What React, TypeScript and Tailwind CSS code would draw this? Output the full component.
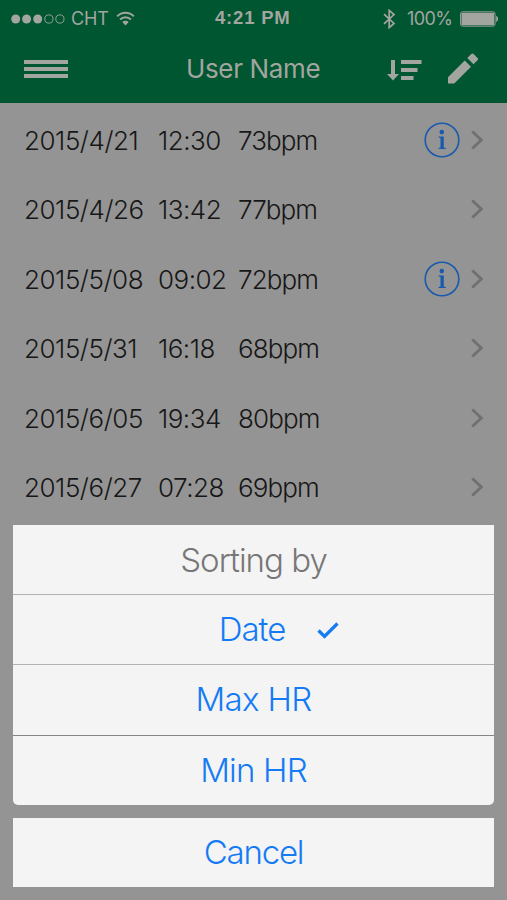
import { clsx } from "clsx"

const records = [
  { date: "2015/4/21", time: "12:30", rate: "73bpm", info: true },
  { date: "2015/4/26", time: "13:42", rate: "77bpm", info: false },
  { date: "2015/5/08", time: "09:02", rate: "72bpm", info: true },
  { date: "2015/5/31", time: "16:18", rate: "68bpm", info: false },
  { date: "2015/6/05", time: "19:34", rate: "80bpm", info: false },
  { date: "2015/6/27", time: "07:28", rate: "69bpm", info: false },
]

function StatusBar() {
  return (
    <div className="flex h-[37px] items-center pl-[11px] text-[18px] leading-none">
      <svg className="shrink-0" width="54" height="10" viewBox="0 0 54 10" fill="currentColor">
        <circle cx="4.7" cy="5" r="4.5" />
        <circle cx="15.6" cy="5" r="4.5" />
        <circle cx="26.7" cy="5" r="4.5" />
        <circle cx="37.9" cy="5" r="4.1" fill="none" stroke="currentColor" strokeWidth="0.9" />
        <circle cx="48.9" cy="5" r="4.1" fill="none" stroke="currentColor" strokeWidth="0.9" />
      </svg>
      <span className="ml-[6px] w-[38px] shrink-0 whitespace-nowrap tracking-[-0.1px]">CHT</span>
      <svg className="ml-[7px] shrink-0" width="19" height="15" viewBox="0 0 20 15" fill="none" stroke="currentColor" strokeWidth="2.1">
        <path d="M1.2 5.3C6.3.3 13.7.3 18.8 5.3" />
        <path d="M4.3 8.5c3.3-3.2 8.1-3.2 11.4 0" />
        <path d="M6.6 11.2c2-1.8 4.8-1.8 6.8 0L10 14.8z" fill="currentColor" stroke="none" />
      </svg>
      <span className="ml-[80px] w-[78px] shrink-0 whitespace-nowrap font-['Liberation_Sans',sans-serif] text-[18.5px] font-semibold tracking-[0.8px]">
        4:21 PM
      </span>
      <svg className="ml-[90px] shrink-0" width="13" height="20" viewBox="0 0 13 20" fill="none" stroke="currentColor" strokeWidth="1.7">
        <path d="M1 5.2l10 9.2-4.800 4.200V1.400L11 5.600 1 14.800" />
      </svg>
      <span className="ml-[11px] w-[46px] shrink-0 whitespace-nowrap tracking-[-0.6px]">100%</span>
      <svg className="ml-[7px] shrink-0" width="39" height="16" viewBox="0 0 39 16">
        <rect x="0.5" y="0.8" width="34.6" height="14.4" rx="2.2" fill="none" stroke="currentColor" strokeWidth="0.9" />
        <rect x="1.5" y="1.8" width="32.6" height="12.4" rx="0.8" fill="currentColor" />
        <path d="M36.2 5.1c2.500.5 2.500 5.300 0 5.800z" fill="currentColor" />
      </svg>
    </div>
  )
}

function NavBar() {
  return (
    <div className="flex h-[66px] items-center pl-[24px] pr-[28px]">
      <div className="mt-[-2px] flex w-[44px] flex-col gap-[3px]">
        <div className="h-[4px] bg-current" />
        <div className="h-[4px] bg-current" />
        <div className="h-[4px] bg-current" />
      </div>
      <div className="ml-[118px] mt-[-2px] w-[136px] whitespace-nowrap text-[26px] leading-none tracking-[-0.35px]">
        User Name
      </div>
      <svg className="ml-[64px]" width="36" height="22" viewBox="0 0 36 22" fill="currentColor">
        <path d="M5 1h4v14h4l-6 6.500L1 15h4zM15 1h20.500v4H15zM15 9h16.500v4H15zM15 17h12.500v4H15z" />
      </svg>
      <svg className="ml-[26px] mt-[-4px]" width="30" height="31" viewBox="3 3 18 18" fill="currentColor">
        <path d="M3 17.250V21h3.750L16.800 10.950l-3.750-3.750zM20.710 7.040a1 1 0 0 0 0-1.410l-2.340-2.340a1 1 0 0 0-1.410 0l-2.400 2.400 3.750 3.750z" />
      </svg>
    </div>
  )
}

function InfoIcon() {
  return (
    <svg width="36" height="36" viewBox="0 0 36 36" fill="#195aac">
      <circle cx="18" cy="18" r="16.8" fill="none" stroke="#195aac" strokeWidth="1.6" />
      <circle cx="17.8" cy="10.1" r="2.3" />
      <path d="M14.500 14.500h5.300V25.500l2 .5v1h-7.300v-1l2-.5V16l-2-.4z" />
    </svg>
  )
}

function Chevron() {
  return (
    <svg width="13" height="20" viewBox="0 0 13 20" fill="none" stroke="#707070" strokeWidth="2.8">
      <path d="M1.300 1.500L10.300 10l-9 8.500" />
    </svg>
  )
}

function RecordList() {
  return (
    <div className="h-[422px] overflow-hidden pt-[2px] text-[26px] font-light leading-none text-[#171717]">
      {records.map((record) => (
        <div key={record.date} className="flex h-[69.5px] items-center pl-[24px] pr-[23px]">
          <span className="w-[134px] whitespace-nowrap pt-[2px] tracking-[-0.45px]">{record.date}</span>
          <span className="w-[80px] whitespace-nowrap pt-[2px] tracking-[-0.5px]">{record.time}</span>
          <span className="whitespace-nowrap pt-[2px] tracking-[-0.9px]">{record.rate}</span>
          <div className="ml-auto flex items-center gap-[11px]">
            {record.info && <InfoIcon />}
            <Chevron />
          </div>
        </div>
      ))}
    </div>
  )
}

function SheetOption({ label, checked, className }: { label: string; checked?: boolean; className?: string }) {
  return (
    <button className={clsx("flex w-full items-center justify-center whitespace-nowrap text-[#147bf5]", className)}>
      {label}
      {checked && (
        <svg className="ml-[32px]" width="22" height="18" viewBox="0 0 22 18" fill="none" stroke="currentColor" strokeWidth="3.2">
          <path d="M1.500 9.500l6 6L20.500 2.500" />
        </svg>
      )}
    </button>
  )
}

function SortSheet() {
  return (
    <div className="mx-[13px] text-[33px] font-light leading-none tracking-[-1px]">
      <div className="h-[280px] overflow-hidden rounded-b-[5px] bg-[#f4f4f4]">
        <div className="flex h-[70px] items-center justify-center border-b border-[#b2b2b2] pt-[2px] text-[#777777]">
          Sorting by
        </div>
        <SheetOption label="Date" checked className="h-[70px] border-b border-[#b2b2b2] pl-[51px]" />
        <SheetOption label="Max HR" className="h-[71px] border-b border-[#858585] pb-[2px] tracking-[-0.7px]" />
        <SheetOption label="Min HR" className="h-[69px] tracking-[-0.8px]" />
      </div>
      <div className="mt-[13px] bg-[#f4f4f4]">
        <SheetOption label="Cancel" className="h-[69px] tracking-[-1.2px]" />
      </div>
    </div>
  )
}

export default function App() {
  return (
    <div className="h-[900px] w-[507px] overflow-hidden bg-[#949494] font-['Inter','Liberation_Sans',sans-serif]">
      <header className="h-[103px] bg-[#005630] text-[#a3a5a1]">
        <StatusBar />
        <NavBar />
      </header>
      <RecordList />
      <SortSheet />
    </div>
  )
}
